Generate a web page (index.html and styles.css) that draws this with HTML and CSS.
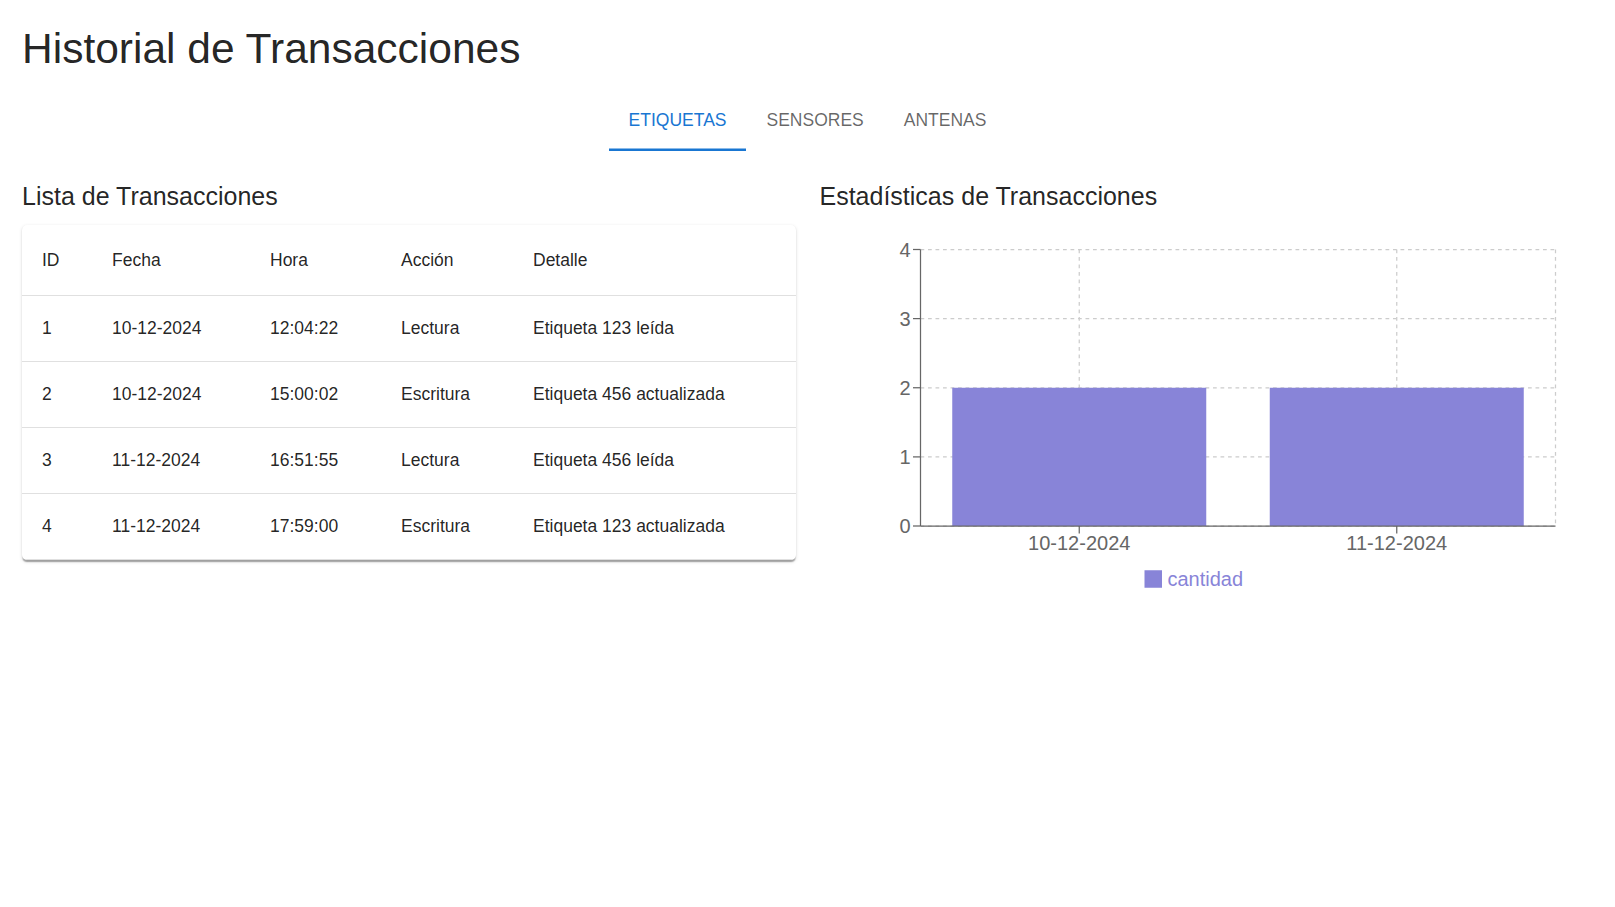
FILE: index.html
```html
<!DOCTYPE html>
<html lang="es">
<head>
<meta charset="utf-8">
<title>Historial de Transacciones</title>
<link rel="stylesheet" href="styles.css">
</head>
<body>
<div class="page">
  <h1 class="title">Historial de Transacciones</h1>
  <nav class="tabs">
    <button class="tab active">Etiquetas</button>
    <button class="tab">Sensores</button>
    <button class="tab">Antenas</button>
  </nav>
  <div class="panel">
    <section class="col">
      <h2 class="heading">Lista de Transacciones</h2>
      <div class="card">
        <table class="table">
          <colgroup>
            <col class="c-id"><col class="c-fecha"><col class="c-hora"><col class="c-accion"><col>
          </colgroup>
          <thead>
            <tr><th>ID</th><th>Fecha</th><th>Hora</th><th>Acción</th><th>Detalle</th></tr>
          </thead>
          <tbody>
            <tr><td>1</td><td>10-12-2024</td><td>12:04:22</td><td>Lectura</td><td>Etiqueta 123 leída</td></tr>
            <tr><td>2</td><td>10-12-2024</td><td>15:00:02</td><td>Escritura</td><td>Etiqueta 456 actualizada</td></tr>
            <tr><td>3</td><td>11-12-2024</td><td>16:51:55</td><td>Lectura</td><td>Etiqueta 456 leída</td></tr>
            <tr><td>4</td><td>11-12-2024</td><td>17:59:00</td><td>Escritura</td><td>Etiqueta 123 actualizada</td></tr>
          </tbody>
        </table>
      </div>
    </section>
    <section class="col">
      <h2 class="heading">Estadísticas de Transacciones</h2>
      <svg class="chart" viewBox="0 0 773.5 375" width="773.5" height="375" xmlns="http://www.w3.org/2000/svg">
        <g class="grid" stroke="#cccccc" stroke-width="1.25" stroke-dasharray="3.75 3.75" fill="none">
          <line x1="100.5" y1="24.5" x2="735.5" y2="24.5"/>
          <line x1="100.5" y1="93.6" x2="735.5" y2="93.6"/>
          <line x1="100.5" y1="162.75" x2="735.5" y2="162.75"/>
          <line x1="100.5" y1="231.9" x2="735.5" y2="231.9"/>
          <line x1="100.5" y1="301" x2="735.5" y2="301"/>
          <line x1="259.25" y1="24.5" x2="259.25" y2="301"/>
          <line x1="576.75" y1="24.5" x2="576.75" y2="301"/>
          <line x1="735.5" y1="24.5" x2="735.5" y2="301"/>
        </g>
        <g fill="#8884d8">
          <rect x="132.25" y="162.75" width="254" height="138.25"/>
          <rect x="449.75" y="162.75" width="254" height="138.25"/>
        </g>
        <g stroke="#666666" stroke-width="1.25" fill="none">
          <line x1="100.5" y1="24.5" x2="100.5" y2="301"/>
          <line x1="100.5" y1="301" x2="735.5" y2="301"/>
          <line x1="93" y1="24.5" x2="100.5" y2="24.5"/>
          <line x1="93" y1="93.6" x2="100.5" y2="93.6"/>
          <line x1="93" y1="162.75" x2="100.5" y2="162.75"/>
          <line x1="93" y1="231.9" x2="100.5" y2="231.9"/>
          <line x1="93" y1="301" x2="100.5" y2="301"/>
          <line x1="259.25" y1="301" x2="259.25" y2="308.5"/>
          <line x1="576.75" y1="301" x2="576.75" y2="308.5"/>
        </g>
        <g class="tick" fill="#666666" text-anchor="end">
          <text x="90.5" y="31.6">4</text>
          <text x="90.5" y="100.7">3</text>
          <text x="90.5" y="169.85">2</text>
          <text x="90.5" y="239">1</text>
          <text x="90.5" y="308.1">0</text>
        </g>
        <g class="tick" fill="#666666" text-anchor="middle">
          <text x="259.25" y="325.2">10-12-2024</text>
          <text x="576.75" y="325.2">11-12-2024</text>
        </g>
        <rect x="324.5" y="345.25" width="17.5" height="17.5" fill="#8884d8"/>
        <text class="tick" x="347.5" y="361.1" fill="#8884d8">cantidad</text>
      </svg>
    </section>
  </div>
</div>
</body>
</html>
```

FILE: styles.css
```css
* { box-sizing: border-box; }

html, body {
  margin: 0;
  padding: 0;
  background: #ffffff;
}

body {
  font-family: "Liberation Sans", Arial, sans-serif;
  color: rgba(0, 0, 0, 0.87);
}

.page {
  padding: 22.8px 22px 0 22px;
}

.title {
  margin: 0 0 15.7px 0;
  font-size: 42.5px;
  font-weight: 400;
  line-height: 1.235;
  color: rgba(0, 0, 0, 0.87);
}

.tabs {
  display: flex;
  justify-content: center;
}

.tab {
  height: 60px;
  padding: 0 20px;
  border: none;
  background: transparent;
  font-family: "Liberation Sans", Arial, sans-serif;
  font-size: 17.5px;
  font-weight: 400;
  line-height: 1.25;
  text-transform: uppercase;
  color: rgba(0, 0, 0, 0.6);
  cursor: pointer;
}

.tab.active {
  color: #1976d2;
  box-shadow: inset 0 -2.5px 0 #1976d2;
}

.panel {
  display: grid;
  grid-template-columns: 1fr 1fr;
  column-gap: 24px;
  margin-top: 25.5px;
}

.col {
  min-width: 0;
}

.heading {
  margin: 0 0 8.75px 0;
  font-size: 25px;
  font-weight: 400;
  line-height: 40px;
  color: rgba(0, 0, 0, 0.87);
}

.card {
  background: #ffffff;
  border-radius: 5px;
  overflow: hidden;
  box-shadow: 0 2.5px 1.25px -1.25px rgba(0, 0, 0, 0.2),
              0 1.25px 1.25px 0 rgba(0, 0, 0, 0.14),
              0 1.25px 3.75px 0 rgba(0, 0, 0, 0.12);
}

.table {
  width: 100%;
  border-collapse: collapse;
  table-layout: fixed;
  font-size: 17.5px;
}

.c-id { width: 70px; }
.c-fecha { width: 158px; }
.c-hora { width: 131px; }
.c-accion { width: 132px; }

.table th,
.table td {
  padding: 20px;
  text-align: left;
  border-bottom: 1px solid #e0e0e0;
  color: rgba(0, 0, 0, 0.87);
  white-space: nowrap;
}

.table th {
  font-weight: 400;
  line-height: 30px;
}

.table td {
  line-height: 25px;
}

.chart {
  display: block;
}

.tick {
  font-family: "Liberation Sans", Arial, sans-serif;
  font-size: 20px;
}
```
